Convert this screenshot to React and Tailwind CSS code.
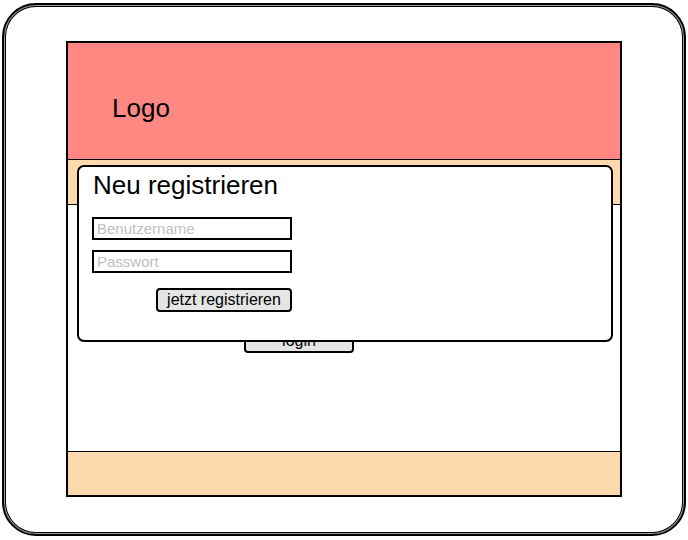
export default function App() {
  return (
    <div className="w-[688px] h-[540px] bg-white pt-[3px] pl-[2px] font-['Liberation_Sans',Arial,sans-serif] text-black">
      {/* Tablet frame */}
      <div className="w-[684px] h-[533px] border-2 border-black rounded-[34px] shadow-[inset_0_0_0_1px_#a0a0a0,inset_0_0_0_2px_#000] pt-[36px] pl-[62px]">
        {/* Screen */}
        <div className="relative w-[556px] h-[456px] border-2 border-black flex flex-col">
          {/* Header */}
          <div className="h-[117px] shrink-0 bg-[#ff8883] border-b border-black flex items-center pl-[44px] pt-[14px]">
            <span className="text-[26px] leading-none">Logo</span>
          </div>

          {/* Nav */}
          <div className="h-[45px] shrink-0 bg-[#ffd9ae] border-b border-black" />

          {/* Content */}
          <div className="flex-1 bg-white pt-[124px] pl-[176px]">
            <button className="w-[110px] h-[24px] bg-[#e5e5e5] border-2 border-black rounded-[4px] text-[16px] leading-none">
              login
            </button>
          </div>

          {/* Footer */}
          <div className="h-[44px] shrink-0 bg-[#ffd9ae] border-t border-black" />

          {/* Register dialog */}
          <div className="absolute left-[9px] top-[122px] w-[536px] h-[177px] bg-white border-2 border-black rounded-[7px] pl-[13px] pt-[4px]">
            <h1 className="text-[26px] leading-[28px] pl-[1px]">Neu registrieren</h1>
            <div className="w-[200px] mt-[18px] flex flex-col">
              <input
                className="h-[23px] w-[200px] border-2 border-black bg-white px-[3px] text-[15px] outline-none placeholder:text-[#c0c0c0]"
                placeholder="Benutzername"
              />
              <input
                className="h-[23px] w-[200px] mt-[10px] border-2 border-black bg-white px-[3px] text-[15px] outline-none placeholder:text-[#c0c0c0]"
                placeholder="Passwort"
              />
              <div className="flex justify-end mt-[15px]">
                <button className="w-[136px] h-[24px] bg-[#e5e5e5] border-2 border-black rounded-[4px] text-[16px] leading-none">
                  jetzt registrieren
                </button>
              </div>
            </div>
          </div>
        </div>
      </div>
    </div>
  );
}
